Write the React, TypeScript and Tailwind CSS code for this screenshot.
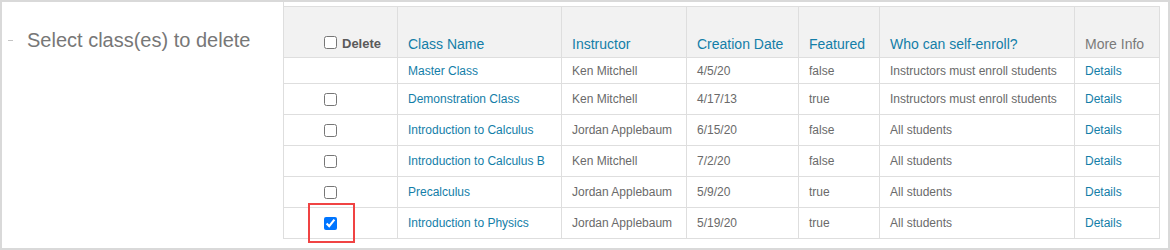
import React from "react";

type Row = {
  name: string;
  instructor: string;
  date: string;
  featured: string;
  who: string;
  checkbox: boolean;
  checked?: boolean;
};

const rows: Row[] = [
  { name: "Master Class", instructor: "Ken Mitchell", date: "4/5/20", featured: "false", who: "Instructors must enroll students", checkbox: false },
  { name: "Demonstration Class", instructor: "Ken Mitchell", date: "4/17/13", featured: "true", who: "Instructors must enroll students", checkbox: true },
  { name: "Introduction to Calculus", instructor: "Jordan Applebaum", date: "6/15/20", featured: "false", who: "All students", checkbox: true },
  { name: "Introduction to Calculus B", instructor: "Ken Mitchell", date: "7/2/20", featured: "false", who: "All students", checkbox: true },
  { name: "Precalculus", instructor: "Jordan Applebaum", date: "5/9/20", featured: "true", who: "All students", checkbox: true },
  { name: "Introduction to Physics", instructor: "Jordan Applebaum", date: "5/19/20", featured: "true", who: "All students", checkbox: true, checked: true },
];

const cell = "border-r border-b border-[#dedede] flex items-center pl-[10px] text-[12px] leading-[14px] whitespace-nowrap";
const head = "border-r border-b border-[#dedede] bg-[#f2f2f2] flex items-end pl-[10px] text-[14px] leading-[16px] whitespace-nowrap h-[51px]";
const link = "text-[#137ea8]";
const gray = "text-[#6a6a6a]";

export default function App() {
  return (
    <div className="w-[1170px] h-[250px] border-2 border-[#d9d9d9] bg-white flex" style={{ fontFamily: '"Liberation Sans", Arial, sans-serif' }}>
      <div className="w-[281px] pt-[27px] flex">
        <div className="flex items-center h-[23px]">
          <div className="ml-[6px] w-[5px] h-[1px] bg-[#c4c4c4]" />
          <span className="ml-[14px] text-[20px] leading-[23px] text-[#777777]">Select class(es) to delete</span>
        </div>
      </div>
      <div className="flex flex-col pr-[7px]">
        <div className="h-[4px] border-l border-[#dedede]" />
        <div className="grid grid-cols-[114px_164px_125px_112px_81px_195px_85px] border-l border-t border-[#dedede]">
          <div className={head + " pb-[8px] pl-[40px]"}>
            <div className="flex items-center h-[13px]">
              <input type="checkbox" className="w-[13px] h-[13px] m-0" readOnly />
              <span className="ml-[5px] text-[13px] leading-[13px] font-bold text-[#5a5a5a] translate-y-[1px]">Delete</span>
            </div>
          </div>
          <div className={head + " pb-[5px] " + link}>Class Name</div>
          <div className={head + " pb-[5px] " + link}>Instructor</div>
          <div className={head + " pb-[5px] " + link}>Creation Date</div>
          <div className={head + " pb-[5px] " + link}>Featured</div>
          <div className={head + " pb-[5px] " + link}>Who can self-enroll?</div>
          <div className={head + " pb-[5px] text-[#7a7a7a]"}>More Info</div>
          {rows.map((r, i) => {
            const h = r.checkbox ? "h-[31px]" : "h-[26px]";
            return (
              <React.Fragment key={i}>
                <div className={cell + " " + h + " pl-[40px] relative"}>
                  {r.checkbox && (
                    <input type="checkbox" className="w-[13px] h-[13px] m-0" defaultChecked={!!r.checked} />
                  )}
                  {r.checked && (
                    <div className="absolute left-[24px] top-[-5px] w-[47px] h-[40px] border-2 border-[#f04343]" />
                  )}
                </div>
                <div className={cell + " " + h + " " + link}>{r.name}</div>
                <div className={cell + " " + h + " " + gray}>{r.instructor}</div>
                <div className={cell + " " + h + " " + gray}>{r.date}</div>
                <div className={cell + " " + h + " " + gray}>{r.featured}</div>
                <div className={cell + " " + h + " " + gray}>{r.who}</div>
                <div className={cell + " " + h + " " + link}>Details</div>
              </React.Fragment>
            );
          })}
        </div>
      </div>
    </div>
  );
}
